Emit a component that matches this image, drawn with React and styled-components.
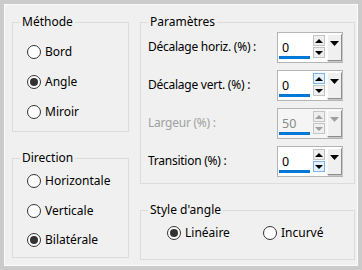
import React from 'react';
import styled, { createGlobalStyle } from 'styled-components';

const Global = createGlobalStyle`
  html, body {
    margin: 0;
    padding: 0;
    background: #cbcbcb;
  }
  body {
    font-family: "Noto Sans", "Liberation Sans", sans-serif;
    font-size: 12px;
    color: #000;
  }
`;

const Panel = styled.div`
  box-sizing: border-box;
  width: 354px;
  height: 262px;
  margin: 4px;
  background: #f0f0f0;
  border: 1px solid #fbfbfb;
  display: grid;
  grid-template-columns: 117px 215px;
  column-gap: 11px;
  padding: 9px 0 0 7px;
`;

const Column = styled.div`
  display: flex;
  flex-direction: column;
  gap: ${p => p.$gap}px;
`;

const Group = styled.fieldset`
  box-sizing: border-box;
  margin: 0;
  padding: 0;
  min-width: 0;
  height: ${p => p.$h}px;
  border: 1px solid #dcdcdc;
  display: flex;
  flex-direction: column;
`;

const Legend = styled.legend`
  margin-left: 7px;
  padding: 0 2px;
  line-height: 16px;
  color: #000;
`;

const RadioList = styled.div`
  display: flex;
  flex-direction: column;
  gap: ${p => p.$gap}px;
  padding: ${p => p.$pad};
`;

const RadioRow = styled.div`
  display: flex;
  align-items: center;
  gap: 4px;
  height: 16px;
  line-height: 16px;
`;

const InlineRadios = styled.div`
  display: grid;
  grid-template-columns: 96px auto;
  padding: 7px 0 0 26px;
`;

const Circle = styled.span`
  box-sizing: border-box;
  width: 14px;
  height: 14px;
  border-radius: 50%;
  border: 1px solid #333;
  background: #fff;
  display: flex;
  align-items: center;
  justify-content: center;
  &::after {
    content: '';
    width: 8px;
    height: 8px;
    border-radius: 50%;
    background: #333;
    display: ${p => (p.$on ? 'block' : 'none')};
  }
`;

const Radio = ({ label, on }) => (
  <RadioRow>
    <Circle $on={on} />
    <span>{label}</span>
  </RadioRow>
);

const Fields = styled.div`
  display: flex;
  flex-direction: column;
  gap: 7px;
  padding: 2px 0 0 7px;
`;

const FieldRow = styled.div`
  display: flex;
  align-items: center;
  justify-content: space-between;
  padding-right: 11px;
  height: 31px;
`;

const Label = styled.span`
  color: ${p => (p.$off ? '#a0a0a0' : '#000')};
  letter-spacing: -0.25px;
  padding-bottom: 2px;
`;

const Spinner = styled.div`
  box-sizing: border-box;
  width: 66px;
  height: 31px;
  border: 1px solid #b4b4b4;
  background: ${p => (p.$off ? '#f5f5f5' : '#fff')};
  display: flex;
  align-items: stretch;
`;

const Value = styled.div`
  position: relative;
  width: 32px;
  padding: 6px 0 0 4px;
  box-sizing: border-box;
  color: ${p => (p.$off ? '#8a8a8a' : '#000')};
  font-size: 12.5px;
  &::after {
    content: '';
    position: absolute;
    left: 1px;
    right: 0;
    bottom: 3px;
    height: 3px;
    background: #0078d7;
  }
`;

const Arrows = styled.div`
  display: flex;
  flex-direction: column;
  gap: 1px;
  padding: 2px 0 0 3px;
`;

const ArrowBtn = styled.div`
  box-sizing: border-box;
  width: 12px;
  height: 11px;
  border: 1px solid ${p => (p.$hot ? '#7eb4ea' : '#c4c4c4')};
  background: ${p => (p.$hot ? '#e5f1fb' : '#efefef')};
  display: flex;
  align-items: center;
  justify-content: center;
`;

const Drop = styled.div`
  box-sizing: border-box;
  width: 15px;
  height: 27px;
  margin: 1px 0 0 2px;
  background: #f0f0f0;
  border-top: 1px solid #fff;
  border-left: 1px solid #fff;
  border-right: 1px solid #8e8e8e;
  border-bottom: 1px solid #8e8e8e;
  box-shadow: 1px 1px 0 #c8c8c8;
  display: flex;
  justify-content: center;
  padding-top: 6px;
`;

const Tri = ({ down, color = '#000', w = 8, h = 4 }) => (
  <svg width={w} height={h} viewBox={`0 0 ${w} ${h}`}>
    <polygon
      points={down ? `0,0 ${w},0 ${w / 2},${h}` : `0,${h} ${w},${h} ${w / 2},0`}
      fill={color}
    />
  </svg>
);

const Spin = ({ value, off, hotUp, hotDown }) => {
  const c = off ? '#a0a0a0' : '#000';
  return (
    <Spinner $off={off}>
      <Value $off={off}>{value}</Value>
      <Arrows>
        <ArrowBtn $hot={hotUp}><Tri color={c} /></ArrowBtn>
        <ArrowBtn $hot={hotDown}><Tri down color={c} /></ArrowBtn>
      </Arrows>
      <Drop><Tri down color={c} w={9} h={5} /></Drop>
    </Spinner>
  );
};

const App = () => (
  <>
    <Global />
    <Panel>
      <Column $gap={18}>
        <Group $h={118}>
          <Legend>Méthode</Legend>
          <RadioList $gap={14} $pad="14px 0 0 14px">
            <Radio label="Bord" />
            <Radio label="Angle" on />
            <Radio label="Miroir" />
          </RadioList>
        </Group>
        <Group $h={108}>
          <Legend>Direction</Legend>
          <RadioList $gap={13.5} $pad="7px 0 0 14px">
            <Radio label="Horizontale" />
            <Radio label="Verticale" />
            <Radio label="Bilatérale" on />
          </RadioList>
        </Group>
      </Column>
      <Column $gap={18}>
        <Group $h={170}>
          <Legend>Paramètres</Legend>
          <Fields>
            <FieldRow>
              <Label>Décalage horiz. (%) :</Label>
              <Spin value="0" />
            </FieldRow>
            <FieldRow>
              <Label>Décalage vert. (%) :</Label>
              <Spin value="0" hotUp />
            </FieldRow>
            <FieldRow>
              <Label $off>Largeur (%) :</Label>
              <Spin value="50" off />
            </FieldRow>
            <FieldRow>
              <Label>Transition (%) :</Label>
              <Spin value="0" hotDown />
            </FieldRow>
          </Fields>
        </Group>
        <Group $h={58}>
          <Legend>Style d'angle</Legend>
          <InlineRadios>
            <Radio label="Linéaire" on />
            <Radio label="Incurvé" />
          </InlineRadios>
        </Group>
      </Column>
    </Panel>
  </>
);

export default App;
